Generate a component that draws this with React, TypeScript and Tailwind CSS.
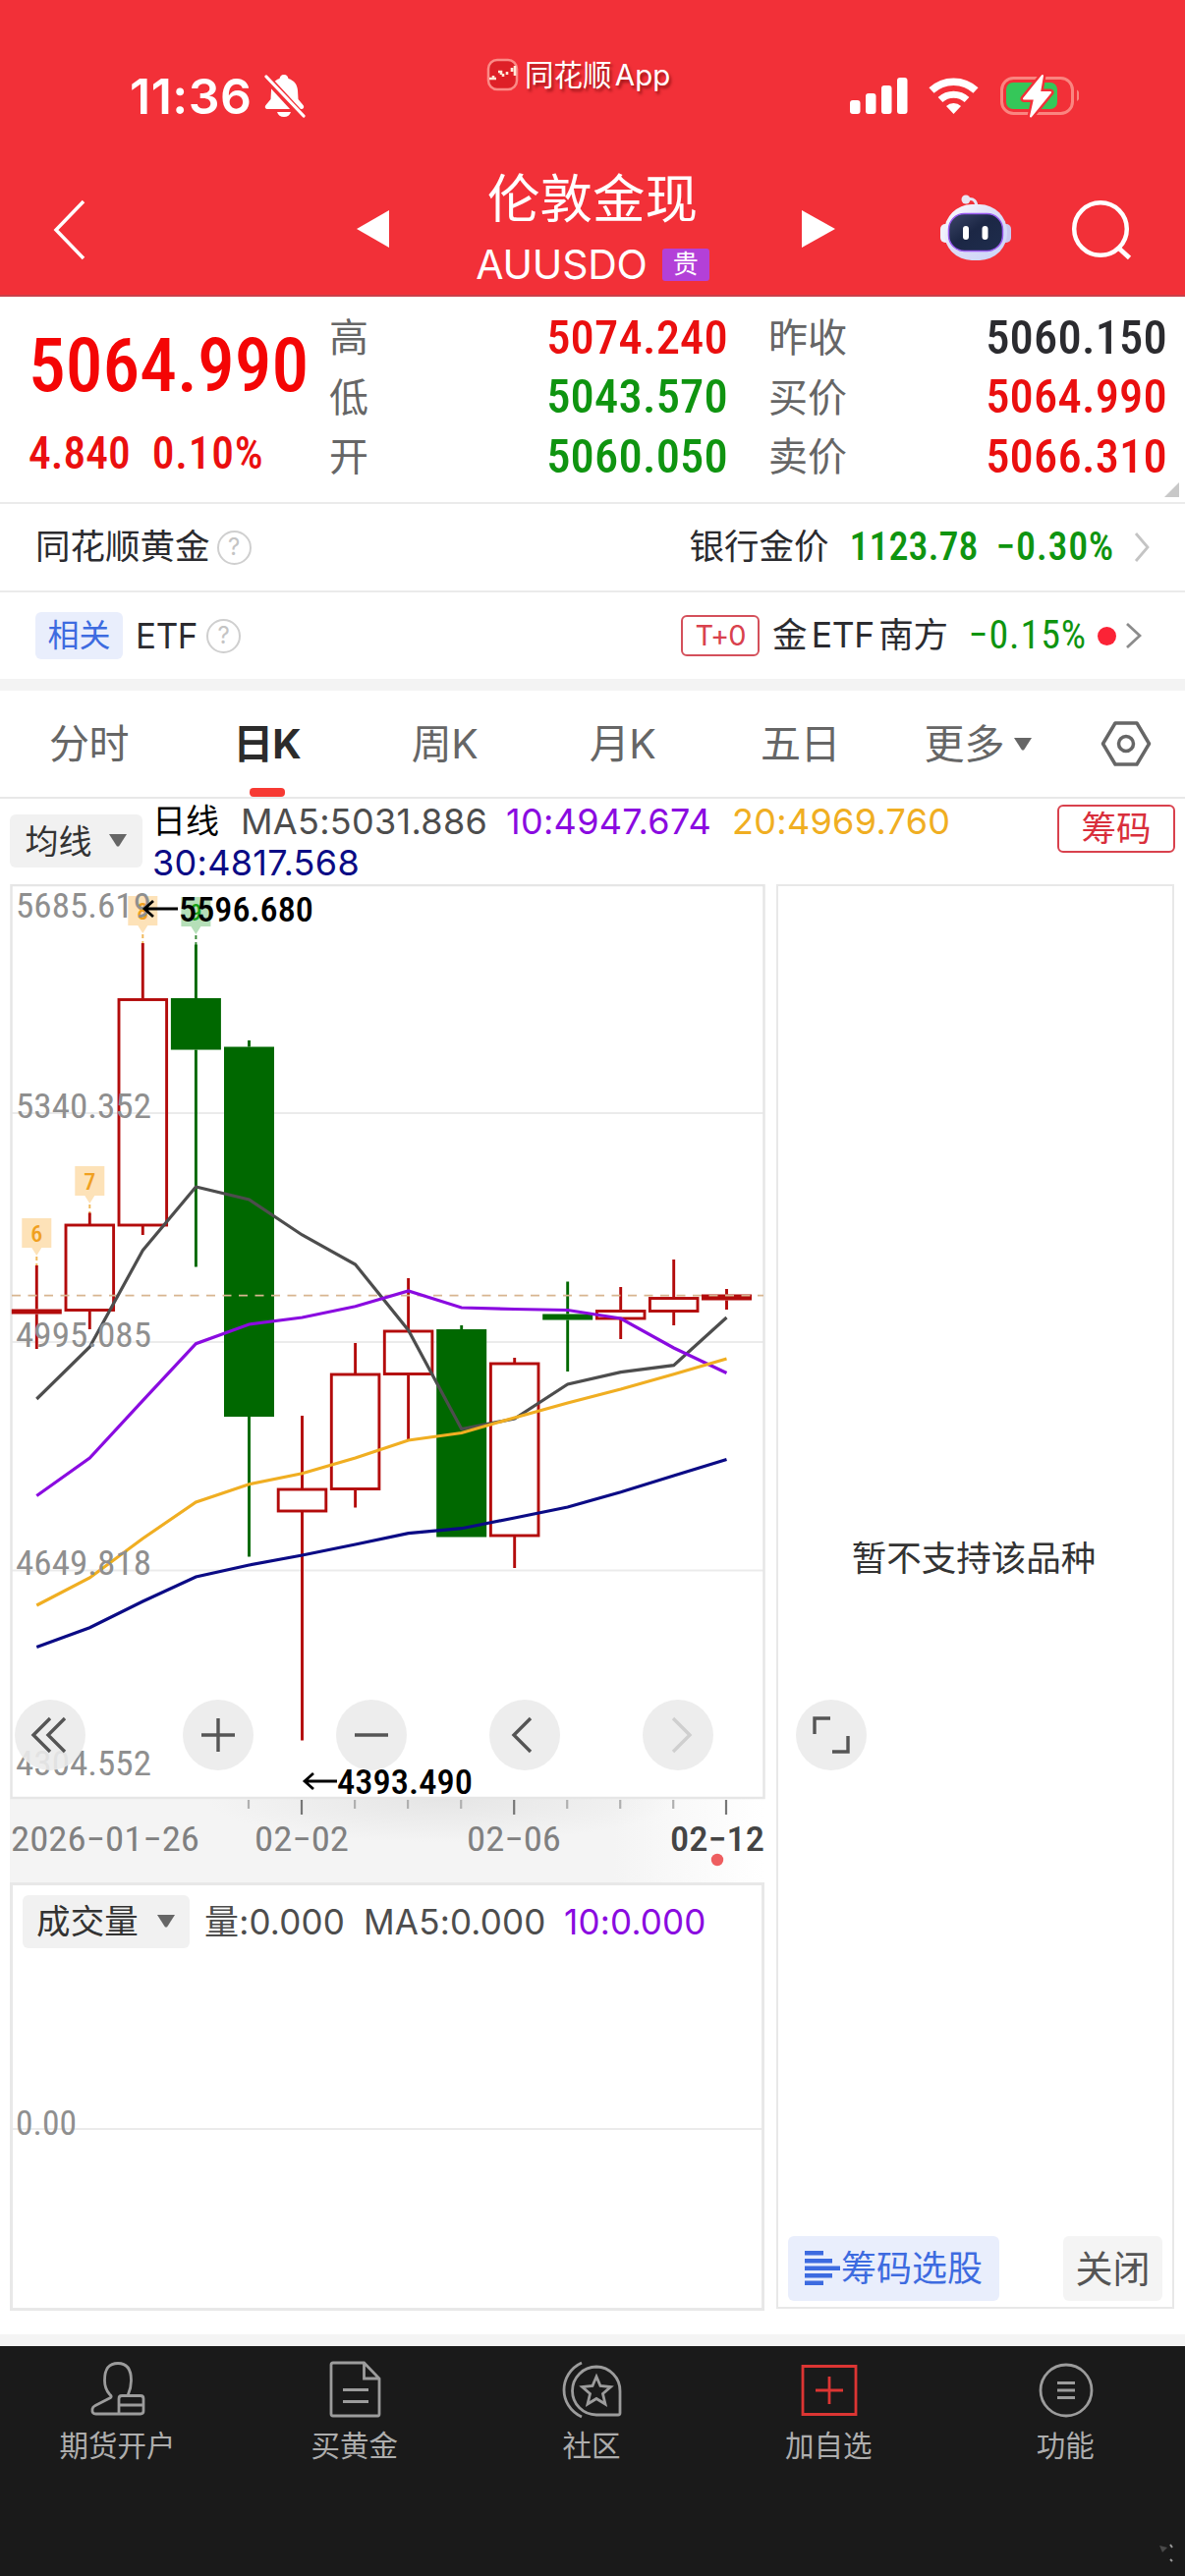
import type { ReactNode } from "react";

const SPOTS = [37.3, 91.3, 145.3, 199.4, 253.5, 307.5, 361.6, 415.6, 469.7, 523.7, 577.7, 631.7, 685.7, 739.5];

type Candle = { up: boolean; hi: number; top: number; bot: number; lo: number; solid?: boolean };

const CANDLES: Candle[] = [
  { up: true, hi: 1288, top: 1332.5, bot: 1337.5, lo: 1373, solid: true },
  { up: true, hi: 1234.5, top: 1246, bot: 1334.5, lo: 1353 },
  { up: true, hi: 960, top: 1016.5, bot: 1248, lo: 1257 },
  { up: false, hi: 961.5, top: 1016, bot: 1068.5, lo: 1289.5 },
  { up: false, hi: 1059, top: 1065.5, bot: 1442, lo: 1584.5 },
  { up: true, hi: 1441, top: 1515, bot: 1539, lo: 1771.5 },
  { up: true, hi: 1367, top: 1398, bot: 1516.5, lo: 1534.5 },
  { up: true, hi: 1301, top: 1354, bot: 1399.5, lo: 1465.5 },
  { up: false, hi: 1349, top: 1353, bot: 1564.5, lo: 1564.5 },
  { up: true, hi: 1382, top: 1387, bot: 1564, lo: 1596 },
  { up: false, hi: 1304.5, top: 1337.5, bot: 1343.5, lo: 1396 },
  { up: true, hi: 1310, top: 1333.5, bot: 1343, lo: 1363 },
  { up: true, hi: 1282, top: 1320.5, bot: 1335.5, lo: 1349 },
  { up: true, hi: 1312, top: 1317.5, bot: 1323.5, lo: 1333, solid: true },
];

const MA_LINES = [
  { color: "#4d4d4d", ys: [1424, 1371, 1272.7, 1208, 1221, 1257, 1287, 1354, 1454.5, 1444, 1409, 1396.7, 1389.7, 1341] },
  { color: "#8a0be0", ys: [1522.5, 1484, 1425.7, 1367.7, 1348, 1341, 1329.7, 1314, 1331, 1332.5, 1333.5, 1342, 1372, 1397.5] },
  { color: "#f0ae22", ys: [1634, 1606, 1566, 1529, 1510.7, 1499.7, 1484, 1466, 1458.5, 1443, 1428, 1414, 1398.7, 1383] },
  { color: "#0b0b85", ys: [1676.5, 1656.7, 1630, 1605, 1593, 1583, 1572, 1560.7, 1555.7, 1545, 1534, 1518.7, 1502, 1485.5] },
];

const PRICE_LABELS = [
  { y: 934, text: "5685.619" },
  { y: 1137.5, text: "5340.352" },
  { y: 1370.5, text: "4995.085" },
  { y: 1603, text: "4649.818" },
  { y: 1806.5, text: "4304.552" },
];

const QUOTES = [
  [
    { label: "高", value: "5074.240", tone: "text-[#ea0f0f]" },
    { label: "低", value: "5043.570", tone: "text-[#0f9410]" },
    { label: "开", value: "5060.050", tone: "text-[#0f9410]" },
  ],
  [
    { label: "昨收", value: "5060.150", tone: "text-[#2b2b2f]" },
    { label: "买价", value: "5064.990", tone: "text-[#ea0f0f]" },
    { label: "卖价", value: "5066.310", tone: "text-[#ea0f0f]" },
  ],
];

const TABS = ["分时", "日K", "周K", "月K", "五日"];

function StatusBar() {
  return (
    <div className="flex h-[172px] items-start">
      <div className="flex w-[490px] items-center pl-[132px] pt-[72px]">
        <span className="text-[50px] font-semibold leading-[52px] tracking-[0.5px]">11:36</span>
        <svg className="ml-[12px]" width="42" height="46" viewBox="0 0 42 46">
          <path d="M20 1c3 0 4 2 4.500 4 6 2 9 6 9.500 12l.5 9 5 6c1.500 2 .5 4-2 4h-34c-2.500 0-3.500-2-2-4l5-6 .5-9C7 11 9.500 7 15.500 5 16 3 17 1 20 1Z" fill="#fff" />
          <path d="M13 39h14c-.8 3-3.500 5-7 5s-6.200-2-7-5Z" fill="#fff" />
          <path d="M1 3l37 40" stroke="#f23038" strokeWidth="8" />
          <path d="M2 3l38 40" stroke="#fff" strokeWidth="3.200" strokeLinecap="round" />
        </svg>
      </div>
      <div className="flex items-center gap-[6px] pl-[5px] pt-[57px]">
        <svg width="33" height="34" viewBox="0 0 33 34">
          <rect x="2" y="2" width="29" height="30" rx="9" fill="#de2027" stroke="#fb8a86" strokeWidth="2.500" />
          <path d="M3 21h3M7 18v3h3M12 14h3v3M17 16v3M21 14v3M26 10v4M29 8v10" stroke="#ffe9d8" strokeWidth="2.600" fill="none" />
        </svg>
        <span className="text-[29.500px] leading-[38px] [text-shadow:2px_3px_3px_rgba(90,0,0,0.55)] [word-spacing:-5px]">
          同花顺 App
        </span>
      </div>
      <svg className="ml-auto mr-[108px] mt-[74px]" width="236" height="46" viewBox="862 74 236 46">
        <g fill="#fff">
          <rect x="865" y="102" width="10.500" height="14" rx="3" />
          <rect x="881" y="95" width="10.500" height="21" rx="3" />
          <rect x="897" y="87" width="10.500" height="29" rx="3" />
          <rect x="913" y="79" width="10.500" height="37" rx="3" />
          <path d="M970.500 116l-7.500-8a11 11 0 0 1 15 0Z" />
        </g>
        <path d="M957 101.500a20 20 0 0 1 27 0" stroke="#fff" strokeWidth="7" fill="none" />
        <path d="M948 92a33 33 0 0 1 45 0" stroke="#fff" strokeWidth="7.500" fill="none" />
        <rect x="1019.500" y="79.500" width="72" height="36" rx="12" fill="none" stroke="#fa8580" strokeWidth="3" />
        <path d="M1096 91.500c4 2 4 9.500 0 11.500Z" fill="#fa8580" />
        <rect x="1024" y="84" width="52" height="27" rx="7" fill="#35c759" />
        <path d="M1061 77l-19 23.500h11l-4 18 20-24.500h-11Z" fill="#fff" stroke="#f23038" strokeWidth="7" strokeLinejoin="round" />
        <path d="M1061 77l-19 23.500h11l-4 18 20-24.500h-11Z" fill="#fff" stroke="#fff" strokeWidth="2" strokeLinejoin="round" />
      </svg>
    </div>
  );
}

function Robot() {
  return (
    <svg width="76" height="72" viewBox="0 0 76 72">
      <defs>
        <linearGradient id="shell" x1="0" y1="0" x2="1" y2="1">
          <stop offset="0" stopColor="#ffffff" />
          <stop offset="0.500" stopColor="#dcdcf6" />
          <stop offset="1" stopColor="#c9d4fa" />
        </linearGradient>
        <linearGradient id="visor" x1="0" y1="0" x2="1" y2="1">
          <stop offset="0" stopColor="#3c4668" />
          <stop offset="0.450" stopColor="#1c2745" />
          <stop offset="1" stopColor="#1e2d4d" />
        </linearGradient>
      </defs>
      <path d="M30 7c7-2 10 2 10 9" stroke="#e6e4f4" strokeWidth="3" fill="none" />
      <circle cx="29" cy="7" r="4.500" fill="#e9e6f3" />
      <rect x="3" y="32" width="12" height="19" rx="5" fill="#eff0fd" />
      <rect x="63" y="32" width="12" height="19" rx="5" fill="#c9c7f0" />
      <rect x="7" y="12" width="64" height="57" rx="28" fill="url(#shell)" />
      <rect x="11.500" y="21.500" width="55" height="38" rx="16" fill="url(#visor)" stroke="#9a5af0" strokeWidth="1.500" />
      <rect x="26" y="34" width="6" height="14" rx="3" fill="#fff" />
      <rect x="45.500" y="34" width="6" height="14" rx="3" fill="#fff" />
    </svg>
  );
}

function Header() {
  return (
    <header className="h-[302px] border-b-2 border-[#c9404a] bg-[#f23038] text-white">
      <StatusBar />
      <div className="flex h-[120px] items-start">
        <div className="w-[360px] pl-[53px] pt-[31px]">
          <svg width="36" height="62" viewBox="0 0 36 62">
            <path d="M32 2L4 31l28 29" stroke="#fff" strokeWidth="3.500" fill="none" />
          </svg>
        </div>
        <svg className="mt-[42px]" width="37" height="38" viewBox="0 0 37 38">
          <path d="M36 0v38L3 19Z" fill="#fff" />
        </svg>
        <div className="flex w-[416px] flex-col items-center pr-[4px]">
          <h1 className="text-[53.500px] leading-[62px]">伦敦金现</h1>
          <div className="mt-[13px] flex items-center gap-[15px]">
            <span className="text-[41px] leading-[44px] tracking-[-0.2px]">AUUSDO</span>
            <span className="flex h-[33px] w-[48px] items-center justify-center rounded-[3px] bg-[#b340d8] text-[26px] leading-none">
              贵
            </span>
          </div>
        </div>
        <svg className="ml-[3px] mt-[42px]" width="36" height="38" viewBox="0 0 36 38">
          <path d="M0 0v38l34-19Z" fill="#fff" />
        </svg>
        <div className="ml-[102px] mt-[24px]">
          <Robot />
        </div>
        <svg className="ml-[60px] mt-[30px]" width="64" height="64" viewBox="0 0 64 64">
          <circle cx="30" cy="31" r="26.800" stroke="#fff" strokeWidth="4.500" fill="none" />
          <path d="M48.500 50.500l11 10" stroke="#fff" strokeWidth="4.800" />
        </svg>
      </div>
    </header>
  );
}

function QuotePanel() {
  return (
    <section className="relative flex h-[211px] border-b-2 border-[#ebebeb] pt-[12px]">
      <div className="w-[335px] pl-[29px] font-['Roboto_Condensed'] font-medium text-[#f40505]">
        <div className="mt-[13px] text-[75.500px] leading-[90px]">5064.990</div>
        <div className="mt-[15px] flex gap-[22px] text-[45.500px] leading-[60px] text-[#ea0f0f]">
          <span>4.840</span>
          <span className="tracking-[0.8px]">0.10%</span>
        </div>
      </div>
      {QUOTES.map((col, i) => (
        <div key={i} className={i === 0 ? "w-[406px]" : "ml-[41px] w-[406px]"}>
          {col.map((q) => (
            <div key={q.label} className="flex h-[60.500px] items-center justify-between">
              <span className="text-[40px] text-[#666]">{q.label}</span>
              <span className={`font-['Roboto_Condensed'] text-[48.500px] font-medium tracking-[0.2px] ${q.tone}`}>
                {q.value}
              </span>
            </div>
          ))}
        </div>
      ))}
      <svg className="absolute bottom-[5px] right-[5px]" width="16" height="15" viewBox="0 0 16 15">
        <path d="M15 0v15H0Z" fill="#c8c8c8" />
      </svg>
    </section>
  );
}

function Help() {
  return (
    <span className="flex h-[35px] w-[35px] items-center justify-center rounded-full border-[2.500px] border-[#cfcfcf] text-[24px] leading-none text-[#c4c4c4]">
      ?
    </span>
  );
}

function Chevron({ w, h, color }: { w: number; h: number; color: string }) {
  return (
    <svg width={w} height={h} viewBox={`0 0 ${w} ${h}`}>
      <path d={`M2 2L${w - 2} ${h / 2}L2 ${h - 2}`} stroke={color} strokeWidth="2.800" fill="none" />
    </svg>
  );
}

function RelatedRows() {
  return (
    <section className="text-[35.500px] text-[#2b2b2f]">
      <div className="flex h-[90px] items-center border-b-2 border-[#ebebeb] pl-[36px] pr-[36px]">
        <span className="mr-[7px]">同花顺黄金</span>
        <Help />
        <span className="ml-auto mr-[21px]">银行金价</span>
        <span className="font-['Roboto_Condensed'] text-[40px] font-medium text-[#0f9410]">1123.78</span>
        <span className="ml-[18px] mr-[20px] font-['Roboto_Condensed'] text-[40px] font-medium tracking-[0.7px] text-[#0f9410]">
          −0.30%
        </span>
        <Chevron w={16} h={32} color="#c4c4c4" />
      </div>
      <div className="flex h-[88px] items-center pl-[36px] pr-[44px]">
        <span className="mr-[13px] flex h-[48px] w-[89px] items-center justify-center rounded-[6px] bg-[#e9eefc] text-[32px] text-[#3d6be0]">
          相关
        </span>
        <span className="mr-[9px] text-[35px] tracking-[-0.4px]">ETF</span>
        <Help />
        <span className="ml-auto mr-[13px] flex h-[42px] w-[80px] items-center justify-center rounded-[6px] border-2 border-[#d4505b] text-[29px] tracking-[-1px] text-[#d9414d]">
          T+0
        </span>
        <span className="mr-[21px] tracking-[-0.4px] [word-spacing:-5px]">金 ETF 南方</span>
        <span className="font-['Roboto_Condensed'] text-[40px] tracking-[0.9px] text-[#0f9410]">−0.15%</span>
        <span className="ml-[11px] mr-[9px] h-[19px] w-[19px] rounded-full bg-[#fb2336]" />
        <Chevron w={17} h={28} color="#8c8c8c" />
      </div>
    </section>
  );
}

function Tabs() {
  return (
    <nav className="flex h-[110px] border-b-2 border-[#e8e8e8] text-[41px] text-[#666]">
      {TABS.map((t) => (
        <div
          key={t}
          className={
            t === "日K"
              ? "relative flex w-[181px] items-center justify-center pt-[2px] font-bold tracking-[-1px] text-[#2b2b2b]"
              : "flex w-[181px] items-center justify-center pt-[2px] tracking-[-0.5px]"
          }
        >
          {t}
          {t === "日K" && <span className="absolute bottom-0 h-[9px] w-[36px] rounded-[4px] bg-[#f73a33]" />}
        </div>
      ))}
      <div className="flex w-[181px] items-center justify-center gap-[8px] pt-[2px]">
        更多
        <Triangle />
      </div>
      <div className="flex w-[120px] items-center justify-center">
        <svg width="52" height="48" viewBox="0 0 52 48">
          <path d="M15 3h22l12.500 21L37 45H15L2.500 24Z" stroke="#666" strokeWidth="3.500" fill="none" strokeLinejoin="round" />
          <circle cx="26" cy="24" r="7.500" stroke="#666" strokeWidth="3.500" fill="none" />
        </svg>
      </div>
    </nav>
  );
}

function Triangle() {
  return (
    <svg width="20" height="14" viewBox="0 0 20 14">
      <path d="M1 0h18L11 12.500h-2Z" fill="#666" />
    </svg>
  );
}

function Legend() {
  return (
    <div className="flex h-[87px] items-start px-[10px]">
      <button className="mt-[16px] flex h-[54px] w-[135px] items-center justify-center gap-[16px] rounded-[6px] bg-[#f1f1f1] text-[34px] text-[#333]">
        均线
        <Triangle />
      </button>
      <div className="ml-[10px] mt-[2px] text-[36px] leading-[42px] tracking-[0.3px]">
        <div className="flex">
          <span className="w-[90px] text-[34px] tracking-normal text-black">日线</span>
          <span className="w-[270px] text-[#4d4d4d]">MA5:5031.886</span>
          <span className="w-[230px] text-[#8a0be0]">10:4947.674</span>
          <span className="text-[#f0ae22]">20:4969.760</span>
        </div>
        <div className="text-[#0b0b85]">30:4817.568</div>
      </div>
      <button className="ml-auto mt-[6px] flex h-[49px] w-[120px] items-center justify-center rounded-[6px] border-2 border-[#d9414d] text-[35.500px] text-[#d92f3c]">
        筹码
      </button>
    </div>
  );
}

// little countdown flag above a candle
function Flag({ x, y, n, green }: { x: number; y: number; n: string; green?: boolean }) {
  return (
    <g>
      <path
        d={`M${x - 15} ${y}h30v30h-10l-5 8l-5 -8h-10Z`}
        fill={green ? "#b5dfb8" : "#fde2b8"}
      />
      <path d={`M${x} ${y + 39}v12`} stroke={green ? "#3a8a3a" : "#f0b95c"} strokeWidth="2" strokeDasharray="4 3" />
      <text x={x} y={y + 24} fontSize="24" textAnchor="middle" fill={green ? "#14a014" : "#f0a020"} fontWeight="500">
        {n}
      </text>
    </g>
  );
}

function KLineChart() {
  return (
    <svg className="block font-['Roboto_Condensed']" width="770" height="1016" viewBox="10 900 770 1016">
      <defs>
        <linearGradient id="axisFade" x1="0" x2="1">
          <stop offset="0" stopColor="#f4f4f4" />
          <stop offset="0.800" stopColor="#f4f4f4" />
          <stop offset="1" stopColor="#ffffff" />
        </linearGradient>
        <radialGradient id="axisShade" cx="0.500" cy="0" r="0.500" gradientTransform="matrix(1 0 0 1.600 0 0)">
          <stop offset="0" stopColor="#d9d9d9" stopOpacity="0.550" />
          <stop offset="1" stopColor="#d9d9d9" stopOpacity="0" />
        </radialGradient>
      </defs>
      <rect x="10" y="1831" width="768" height="85" fill="url(#axisFade)" />
      <rect x="210" y="1831" width="480" height="55" fill="url(#axisShade)" />
      <path d="M12 1133h765M12 1366h765M12 1598.500h765" stroke="#ebebeb" strokeWidth="2" />
      <rect x="11.500" y="901" width="766" height="929" fill="none" stroke="#e6e6e6" strokeWidth="2.500" />

      <Flag x={37.3} y={1240} n="6" />
      <Flag x={91.3} y={1187} n="7" />
      <Flag x={145.3} y={912} n="8" />
      <Flag x={199.4} y={913} n="9" green />

      {CANDLES.map((c, i) => {
        const x = SPOTS[i];
        const color = c.up ? "#b30b0b" : "#006800";
        return (
          <g key={i} stroke={color} strokeWidth="2.900">
            <path d={`M${x} ${c.hi}V${c.top}M${x} ${c.bot}V${c.lo}`} />
            {c.up && !c.solid ? (
              <rect x={x - 24.3} y={c.top + 1} width="48.600" height={c.bot - c.top - 2} fill="none" />
            ) : (
              <rect x={x - 25.5} y={c.top} width="51" height={c.bot - c.top} fill={color} stroke="none" />
            )}
          </g>
        );
      })}

      <path d="M12 1318.700h765" stroke="#d8b590" strokeWidth="1.800" strokeDasharray="9 7.500" />

      {MA_LINES.map((l) => (
        <polyline
          key={l.color}
          points={l.ys.map((y, i) => `${SPOTS[i]},${y}`).join(" ")}
          fill="none"
          stroke={l.color}
          strokeWidth="3.200"
        />
      ))}

      <g fill="#8f8f8f" fontSize="34.500" fontWeight="450">
        {PRICE_LABELS.map((p) => (
          <text key={p.text} x="16" y={p.y} textLength="138" lengthAdjust="spacingAndGlyphs">
            {p.text}
          </text>
        ))}
      </g>

      <g fill="#000" fontSize="35" fontWeight="550">
        <path d="M181 925h-34M156 917l-9 8l9 8" stroke="#000" strokeWidth="2.800" fill="none" />
        <text x="182" y="938" textLength="137" lengthAdjust="spacingAndGlyphs">5596.680</text>
        <path d="M343 1813h-33M319 1805l-9 8l9 8" stroke="#000" strokeWidth="2.800" fill="none" />
        <text x="343" y="1826" textLength="138" lengthAdjust="spacingAndGlyphs">4393.490</text>
      </g>

      {SPOTS.slice(4).map((x, i) => {
        const major = i === 1 || i === 5 || i === 9;
        return (
          <path key={x} d={`M${x - 0.5} 1832V${major ? 1847 : 1841}`} stroke={major ? "#777" : "#b0b0b0"} strokeWidth="2.200" />
        );
      })}
      <g fill="#808080" fontSize="35" fontWeight="450">
        <text x="11" y="1884" textLength="192" lengthAdjust="spacingAndGlyphs">2026−01−26</text>
        <text x="259" y="1884" textLength="96" lengthAdjust="spacingAndGlyphs">02−02</text>
        <text x="475" y="1884" textLength="96" lengthAdjust="spacingAndGlyphs">02−06</text>
        <text x="682" y="1884" textLength="96" lengthAdjust="spacingAndGlyphs" fill="#444" fontWeight="500">02−12</text>
      </g>
      <circle cx="730" cy="1893" r="6.200" fill="#ee5e60" />
    </svg>
  );
}

function VolumePane() {
  return (
    <div className="relative h-[436px] w-[768px] border-[3px] border-[#e8e8e8]">
      <div className="flex items-center pl-[10px] pt-[10px] text-[35px] leading-[54px] tracking-[0.2px] text-[#4d4d4d]">
        <button className="mr-[15px] flex h-[54px] w-[170px] items-center justify-center gap-[18px] rounded-[6px] bg-[#f1f1f1] text-[34.500px] text-[#333]">
          成交量
          <Triangle />
        </button>
        <span className="w-[162px]">量:0.000</span>
        <span className="w-[204px]">MA5:0.000</span>
        <span className="text-[#8a0be0]">10:0.000</span>
      </div>
      <div className="mt-[183px] h-[2px] bg-[#ebebeb]" />
      <span className="absolute left-[3px] top-[220px] font-['Roboto_Condensed'] text-[35.500px] leading-[44px] text-[#8f8f8f]">
        0.00
      </span>
    </div>
  );
}

function RoundButton({ children }: { children: ReactNode }) {
  return (
    <button className="flex h-[72px] w-[72px] items-center justify-center rounded-full bg-[#ebebeb]/90">
      <svg width="44" height="44" viewBox="-22 -22 44 44" fill="none" stroke="#555" strokeWidth="3.400">
        {children}
      </svg>
    </button>
  );
}

function ChartTools() {
  return (
    <div className="absolute left-[15px] top-[830px] flex">
      <RoundButton>
        <path d="M0 -17L-17 0L0 17M15 -17L-2 0L15 17" />
      </RoundButton>
      <div className="ml-[99px] flex gap-[84px]">
        <RoundButton>
          <path d="M-17 0h34M0 -17v34" />
        </RoundButton>
        <RoundButton>
          <path d="M-17 0h34" />
        </RoundButton>
        <RoundButton>
          <path d="M6 -17L-11 0L6 17" />
        </RoundButton>
        <RoundButton>
          <path d="M-5 -17L12 0L-5 17" stroke="#cfcfcf" />
        </RoundButton>
        <RoundButton>
          <path d="M-17 -1V-17H-1M17 1V17H1" />
        </RoundButton>
      </div>
    </div>
  );
}

function ChipPanel() {
  return (
    <aside className="ml-[10px] flex h-[1450px] w-[405px] flex-col border-2 border-[#e8e8e8]">
      <div className="flex h-[1370px] items-center justify-center pr-[3px] text-[35.500px] text-[#333]">
        暂不支持该品种
      </div>
      <div className="mt-[4px] flex justify-between px-[10px]">
        <button className="flex h-[66px] w-[215px] items-center justify-center gap-[1px] rounded-[6px] bg-[#e9eefc] text-[36px] text-[#3d6be0]">
          <svg width="36" height="36" viewBox="0 0 36 36" fill="#3d6be0">
            <path d="M0 0h19v4.500H0ZM0 8h28v4.500H0ZM0 15.500h36v4.500H0ZM0 23h28v4.500H0ZM0 30.500h19v4.500H0Z" />
          </svg>
          筹码选股
        </button>
        <button className="flex h-[66px] w-[101px] items-center justify-center rounded-[6px] bg-[#f4f4f4] text-[38px] text-[#555]">
          关闭
        </button>
      </div>
    </aside>
  );
}

const NAV: { label: string; icon: ReactNode; red?: boolean }[] = [
  {
    label: "期货开户",
    icon: (
      <path d="M29 53H5.500c-2.500 0-4-1.500-3.500-5 .3-2 1-2.500 3-3.500l15.500-8c1.500-1 .5-2-1-3.500-3.500-4-5-8-5-14C14.500 7 19 1.500 28 1.500S41.500 7 41.500 19c0 6-1 10-3.500 15.500M29 53V37.500c0-2 .5-3 3-3h19c2 0 3 1 3 3V50c0 2-1 3-3 3ZM29 44h25" />
    ),
  },
  {
    label: "买黄金",
    icon: <path d="M37.500 1H6Q4 1 4 3v50q0 2 2 2h45.500q1.500 0 1.500-2V17ZM37.500 1v16H53M16 28.500h26M16 40.500h26" />,
  },
  {
    label: "社区",
    icon: (
      <path d="M18 1C-6 12-6 45 18 56M33 5a24.500 24.500 0 0 0 0 49h22q2 0 2-2V30A24.500 24.500 0 0 0 33 5ZM33 15l4 9.500 10.500 1-8 7 2.500 10.500-9-5.500-9 5.500 2.500-10.500-8-7 10.500-1Z" />
    ),
  },
  {
    label: "加自选",
    red: true,
    icon: <path d="M2 4.500h54v49H2ZM15 29h28M29 15v28" />,
  },
  {
    label: "功能",
    icon: (
      <>
        <circle cx="29" cy="29" r="26" />
        <path d="M20 21.500h18M20 29h18M20 36.500h18" />
      </>
    ),
  },
];

function BottomNav() {
  return (
    <footer className="relative flex h-[234px] bg-[#1a1a1a] pt-[14px]">
      {NAV.map((n) => (
        <div key={n.label} className="flex w-[241.200px] flex-col items-center">
          <svg
            className="overflow-visible"
            width="58"
            height="62"
            viewBox="0 -2 58 62"
            fill="none"
            stroke={n.red ? "#dc3533" : "#9c9c9c"}
            strokeWidth="2.800"
          >
            {n.icon}
          </svg>
          <span className="mt-[5px] pr-[2px] text-[29.500px] leading-[40px] text-[#adadad]">{n.label}</span>
        </div>
      ))}
      <svg className="absolute bottom-[12px] right-[10px]" width="24" height="22" viewBox="0 0 24 22">
        <path d="M8 3l8 2-5 5Z" fill="#4a4a4a" />
        <path d="M19 2l2 3M19 17l2 2" stroke="#9a9a9a" strokeWidth="2" />
      </svg>
    </footer>
  );
}

export default function App() {
  return (
    <div className="h-[2622px] w-[1206px] overflow-hidden bg-white font-['Inter','Noto_Sans_CJK_SC',sans-serif]">
      <Header />
      <QuotePanel />
      <RelatedRows />
      <div className="h-[12px] bg-[#f3f3f3]" />
      <Tabs />
      <Legend />
      <main className="relative flex h-[1476px]">
        <div className="ml-[10px] w-[770px]">
          <KLineChart />
          <VolumePane />
        </div>
        <ChipPanel />
        <ChartTools />
      </main>
      <div className="h-[12px] bg-[#f4f4f4]" />
      <BottomNav />
    </div>
  );
}
